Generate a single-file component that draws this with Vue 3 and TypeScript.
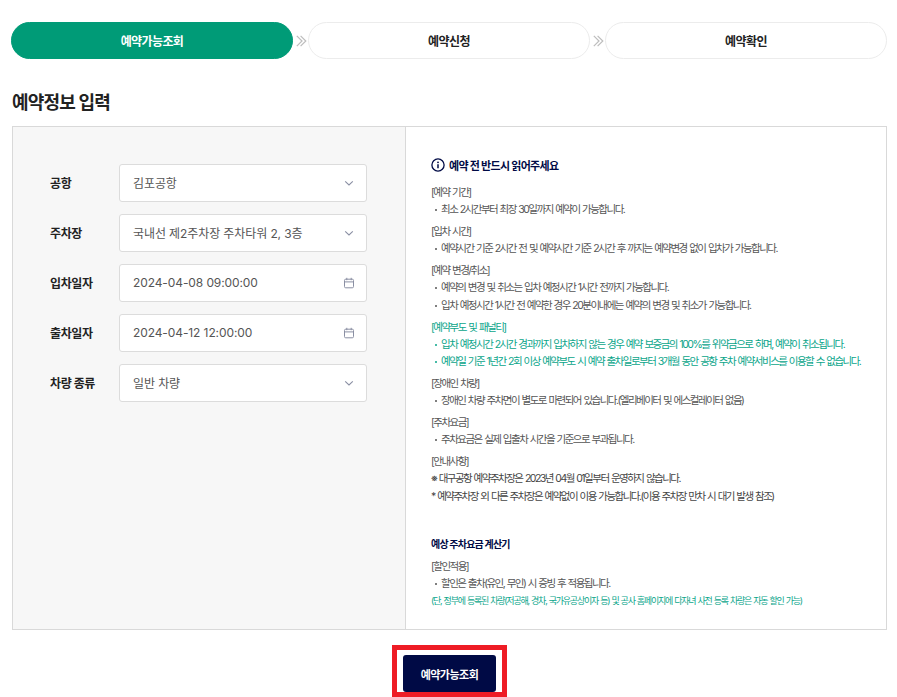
<script setup lang="ts">
interface Row { label: string; value: string; icon: 'chevron' | 'calendar' }
interface Group { title: string; items: string[]; accent?: boolean; plain?: boolean }

const steps = ['예약가능조회', '예약신청', '예약확인']

const rows: Row[] = [
  { label: '공항', value: '김포공항', icon: 'chevron' },
  { label: '주차장', value: '국내선 제2주차장 주차타워 2, 3층', icon: 'chevron' },
  { label: '입차일자', value: '2024-04-08 09:00:00', icon: 'calendar' },
  { label: '출차일자', value: '2024-04-12 12:00:00', icon: 'calendar' },
  { label: '차량 종류', value: '일반 차량', icon: 'chevron' },
]

const groups: Group[] = [
  { title: '[예약 기간]', items: ['최소 2시간부터 최장 30일까지 예약이 가능합니다.'] },
  { title: '[입차 시간]', items: ['예약시간 기준 2시간 전 및 예약시간 기준 2시간 후 까지는 예약변경 없이 입차가 가능합니다.'] },
  { title: '[예약 변경/취소]', items: ['예약의 변경 및 취소는 입차 예정시간 1시간 전까지 가능합니다.', '입차 예정시간 1시간 전 예약한 경우 20분이내에는 예약의 변경 및 취소가 가능합니다.'] },
  { title: '[예약부도 및 패널티]', accent: true, items: ['입차 예정시간 2시간 경과까지 입차하지 않는 경우 예약 보증금의 100%를 위약금으로 하며, 예약이 취소됩니다.', '예약일 기준 1년간 2회 이상 예약부도 시 예약 출차일로부터 3개월 동안 공항 주차 예약서비스를 이용할 수 없습니다.'] },
  { title: '[장애인 차량]', items: ['장애인 차량 주차면이 별도로 마련되어 있습니다.(엘리베이터 및 에스컬레이터 없음)'] },
  { title: '[주차요금]', items: ['주차요금은 실제 입출차 시간을 기준으로 부과됩니다.'] },
  { title: '[안내사항]', plain: true, items: ['※ 대구공항 예약주차장은 2023년 04월 01일부터 운영하지 않습니다.', '* 예약주차장 외 다른 주차장은 예약없이 이용 가능합니다.(이용 주차장 만차 시 대기 발생 참조)'] },
]
</script>

<template>
  <div class="page">
    <ol class="steps">
      <template v-for="(step, i) in steps" :key="step">
        <li class="step" :class="{ active: i === 0 }">
          {{ step }}
          <svg v-if="i < steps.length - 1" class="arrows" width="11" height="12" viewBox="0 0 11 12" fill="none" stroke="#bdbdbd" stroke-width="1.2">
            <path d="M.8 .8l5.2 5.2-5.2 5.2M4.6 .8l5.2 5.2-5.2 5.2" />
          </svg>
        </li>
      </template>
    </ol>

    <h2 class="title">예약정보 입력</h2>

    <div class="panel">
      <section class="form">
        <div v-for="row in rows" :key="row.label" class="row">
          <span class="label">{{ row.label }}</span>
          <div class="field">
            <span class="value">{{ row.value }}</span>
            <svg v-if="row.icon === 'chevron'" width="12" height="12" viewBox="0 0 12 12" fill="none" stroke="#8a8fa3" stroke-width="1.1">
              <path d="M2.2 4.3L6 7.9l3.8-3.6" />
            </svg>
            <svg v-else width="12" height="12" viewBox="0 0 12 12" fill="none" stroke="#8a8fa3" stroke-width="1">
              <rect x="1.5" y="2.2" width="9" height="8.6" rx="1.2" />
              <path d="M1.5 4.9h9M3.8 .8v2.4M8.2 .8v2.4" />
            </svg>
          </div>
        </div>
      </section>

      <section class="notes">
        <h3 class="notes-title">
          <svg width="14" height="14" viewBox="0 0 14 14" fill="none">
            <circle cx="7" cy="7" r="6.1" stroke="#000a45" stroke-width="1.3" />
            <circle cx="7" cy="4.3" r=".9" fill="#000a45" />
            <path d="M7 6.2v4" stroke="#000a45" stroke-width="1.5" />
          </svg>
          예약 전 반드시 읽어주세요
        </h3>

        <div v-for="g in groups" :key="g.title" class="group" :class="{ accent: g.accent }">
          <p class="line">{{ g.title }}</p>
          <p v-for="item in g.items" :key="item" class="line" :class="{ item: !g.plain, strong: g.plain }">{{ item }}</p>
        </div>

        <h4 class="calc-title">예상 주차요금 계산기</h4>
        <div class="group">
          <p class="line">[할인적용]</p>
          <p class="line item">할인은 출차(유인, 무인) 시 증빙 후 적용됩니다.</p>
          <p class="line small">(단, 정부에 등록된 차량(저공해, 경차, 국가유공상이자 등) 및 공사 홈페이지에 다자녀 사전 등록 차량은 자동 할인 가능)</p>
        </div>
      </section>
    </div>

    <div class="actions">
      <button class="submit" type="button">예약가능조회</button>
      <span class="highlight"></span>
    </div>
  </div>
</template>

<style scoped>
.page {
  width: 897px;
  height: 697px;
  overflow: hidden;
  box-sizing: border-box;
  padding-top: 22px;
  background: #fff;
  font-family: Inter, "Noto Sans CJK KR", sans-serif;
  color: #333;
}
.steps {
  display: flex;
  gap: 15px;
  list-style: none;
  margin: 0 10px 0 11px;
  padding: 0;
}
.step {
  position: relative;
  flex: 1;
  height: 37px;
  box-sizing: border-box;
  display: flex;
  align-items: center;
  justify-content: center;
  padding-bottom: 1px;
  border: 1px solid #ececec;
  border-radius: 19px;
  background: #fff;
  font-size: 12px;
  font-weight: 700;
  letter-spacing: -0.6px;
  color: #222;
}
.step.active {
  background: #009b77;
  border-color: #009b77;
  color: #fff;
}
.arrows {
  position: absolute;
  right: -15px;
  top: 12px;
}
.title {
  margin: 32px 0 0 12px;
  height: 24px;
  line-height: 24px;
  font-size: 18px;
  font-weight: 700;
  letter-spacing: -0.8px;
  color: #222;
}
.panel {
  display: flex;
  margin: 11px 10px 0 12px;
  height: 504px;
  box-sizing: border-box;
  border: 1px solid #d9d9d9;
}
.form {
  width: 393px;
  flex: none;
  box-sizing: border-box;
  padding: 37px 38px 0 37px;
  background: #f7f7f7;
  border-right: 1px solid #d9d9d9;
  display: flex;
  flex-direction: column;
  gap: 12px;
}
.row {
  display: flex;
  align-items: center;
}
.label {
  width: 69px;
  flex: none;
  padding-bottom: 2px;
  font-size: 12px;
  font-weight: 700;
  letter-spacing: -0.4px;
  color: #222;
}
.field {
  flex: 1;
  height: 38px;
  box-sizing: border-box;
  display: flex;
  align-items: center;
  justify-content: space-between;
  padding: 0 11px 0 13px;
  background: #fff;
  border: 1px solid #dcdcdc;
  border-radius: 3px;
}
.value {
  padding-bottom: 2px;
  font-size: 12px;
  letter-spacing: -0.1px;
  color: #555;
}
.notes {
  flex: 1;
  padding: 29px 20px 0 25px;
}
.notes-title {
  display: flex;
  align-items: center;
  gap: 4px;
  margin: 0 0 11px;
  height: 17px;
  font-size: 11px;
  font-weight: 700;
  letter-spacing: -0.7px;
  color: #000a45;
}
.group {
  margin-bottom: 5px;
  color: #555;
}
.line {
  margin: 0;
  height: 17.1px;
  line-height: 17.1px;
  font-size: 10.5px;
  letter-spacing: -1.52px;
  word-spacing: 1px;
  white-space: nowrap;
}
.item {
  position: relative;
  padding-left: 10px;
}
.item::before {
  content: "";
  position: absolute;
  left: 4px;
  top: 8px;
  width: 2px;
  height: 2px;
  border-radius: 50%;
  background: currentColor;
}
.strong {
  color: #444;
}
.accent {
  color: #0aa58a;
}
.calc-title {
  margin: 31px 0 5px;
  height: 17px;
  line-height: 17px;
  font-size: 10px;
  font-weight: 700;
  letter-spacing: -0.8px;
  color: #000a45;
}
.small {
  font-size: 9px;
  letter-spacing: -1.22px;
  word-spacing: 0.8px;
  color: #0aa58a;
}
.actions {
  position: relative;
  display: flex;
  justify-content: center;
  margin-top: 25px;
  padding-left: 2px;
}
.submit {
  width: 93px;
  height: 37px;
  padding: 0;
  border: 0;
  border-radius: 3px;
  background: #000a45;
  color: #fff;
  font-family: inherit;
  font-size: 11px;
  font-weight: 700;
  letter-spacing: -0.5px;
}
.highlight {
  position: absolute;
  left: 392px;
  top: -10px;
  width: 115px;
  height: 52px;
  box-sizing: border-box;
  border: 5px solid #ee1c25;
  pointer-events: none;
}
</style>

<style>
html, body { margin: 0; overflow: hidden; }
</style>
